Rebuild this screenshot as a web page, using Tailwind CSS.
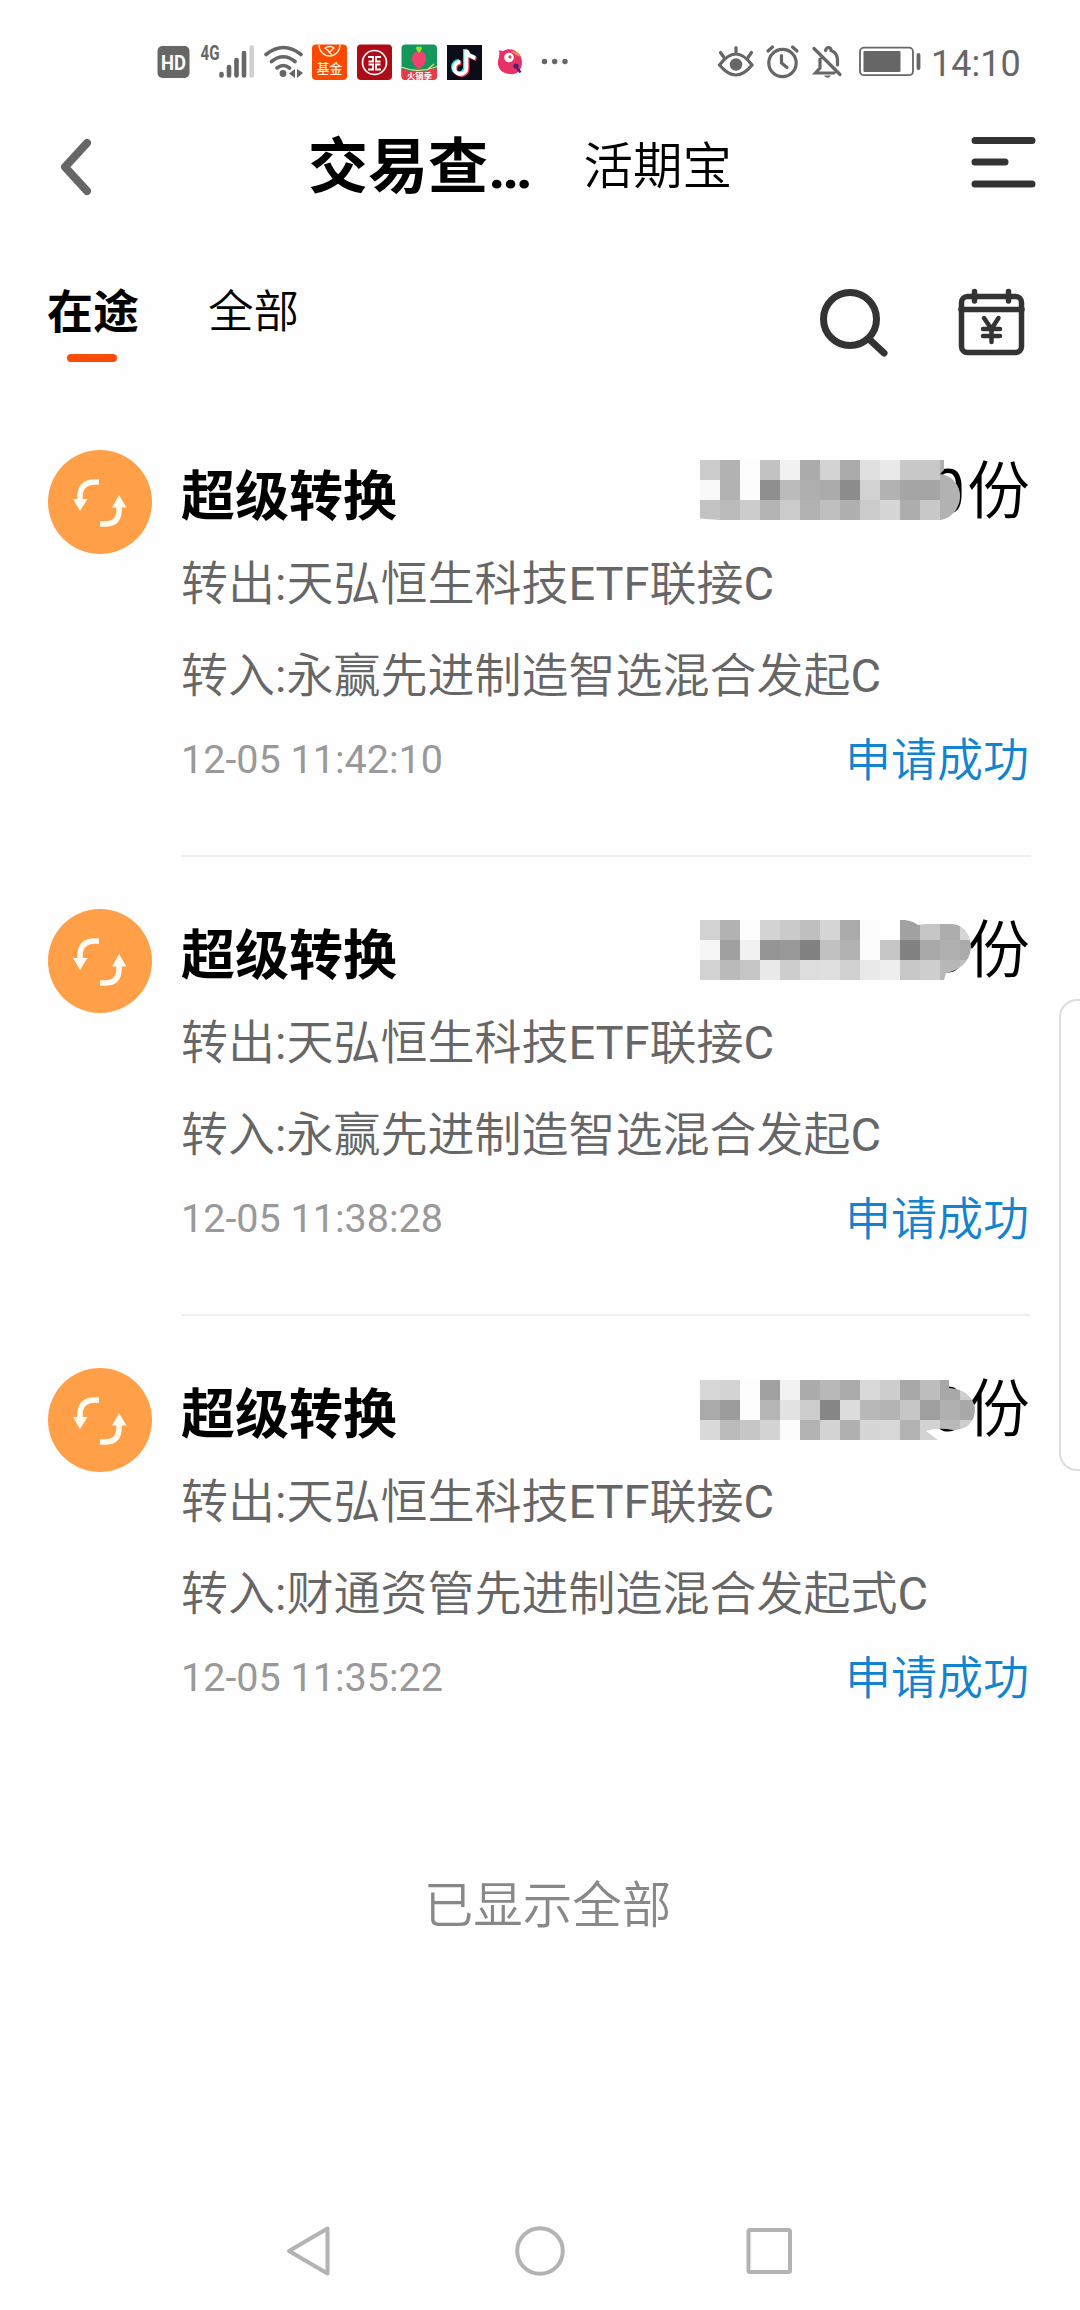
<!DOCTYPE html>
<html lang="zh-CN">
<head>
  <meta charset="UTF-8" />
  <title>交易查询</title>
  <script src="https://cdn.jsdelivr.net/npm/@tailwindcss/browser@4"></script>
</head>
<body class="bg-[#fefefe] w-[1080px] h-[2310px] flex flex-col overflow-hidden relative font-['Roboto','Noto_Sans_CJK_SC',sans-serif] text-black">

  <!-- Status bar -->
  <div class="h-[110px] pt-[40px] pl-[157px] pr-[60px] flex items-start justify-between shrink-0">
    <svg class="w-[420px] h-[44px]" viewBox="157 40 420 44">
      <rect x="157.500" y="46" width="32" height="32" rx="5" fill="#666" />
      <text x="173.500" y="70" text-anchor="middle" textLength="25" lengthAdjust="spacingAndGlyphs" font-size="21" font-weight="700" fill="#fff">HD</text>
      <text x="200.500" y="60" textLength="19" lengthAdjust="spacingAndGlyphs" font-size="19.500" font-weight="700" fill="#666">4G</text>
      <g stroke="#666" stroke-width="4.600" stroke-linecap="round">
        <path d="M221.500 74v1.500M229 67v8.500M236.500 60v15.500M244 53v22.500" />
        <path stroke="#d0d0d0" d="M251.700 47.500v28" />
      </g>
      <g fill="none" stroke="#666" stroke-width="3.600" stroke-linecap="round">
        <path d="M266 54.500q17.500-14 35 0M271.500 61.500q11.800-9.500 23.500 0M277 68q6.300-5 12.500 0" />
      </g>
      <circle cx="283" cy="73.500" r="3.400" fill="#666" />
      <path d="M295 69v9l-6-4.500zM297 69l6 4-6 5z" fill="#666" />
      <!-- 基金 -->
      <rect x="312" y="44.500" width="35" height="35.500" rx="4" fill="#fb4a05" />
      <path d="M319 45a10.500 11 0 0 0 21 0" fill="none" stroke="#fff3d8" stroke-width="1.300" />
      <path d="M325 48q5-3 9 0l-4 4zM328 51l4 4" fill="none" stroke="#fff3d8" stroke-width="1.300" />
      <text x="329.500" y="72.500" text-anchor="middle" font-size="13" font-weight="500" fill="#fff3d8">基金</text>
      <!-- bank -->
      <rect x="357" y="44.500" width="35" height="35.500" rx="4" fill="#ad0b16" />
      <circle cx="374.500" cy="62.500" r="12" fill="none" stroke="#fff" stroke-width="1.700" />
      <path d="M368 57h5v4.500h-4.500M381 57h-5v4.500h4.500M368.500 64.500h4.500v5h-5M380.500 64.500h-4.500v5h5" fill="none" stroke="#fff" stroke-width="1.900" />
      <!-- radish -->
      <rect x="401.500" y="44.500" width="35.500" height="35.500" rx="4" fill="#15965a" />
      <path d="M401.500 69q14 5 35.500-1v8q0 4-4 4h-27.500q-4 0-4-4z" fill="#e93a49" />
      <path d="M401.500 67q16 7 35.500-.5M427 70l7-6" fill="none" stroke="#ead88a" stroke-width="1.200" />
      <path d="M419 52c-5-1-7 3-7 7 0 5 4 8 7 10 3-2 7-5 7-10 0-4-2-8-7-7z" fill="#ef426e" />
      <path d="M419 52q-4-6 0-4 4-2 0 4" fill="#94df32" stroke="#94df32" stroke-width="2" />
      <text x="419.500" y="78.500" text-anchor="middle" font-size="8.300" font-weight="700" fill="#fff">火锅季</text>
      <!-- music note -->
      <rect x="447" y="45" width="35" height="35" fill="#0c0b18" />
      <g fill="none" stroke-width="4">
        <path stroke="#25dfdc" d="M465 49v18.500a6 6 0 1 1-6-6.500M465 49q1 6 9 8" />
        <path stroke="#f33559" d="M467.500 51v18.500a6 6 0 1 1-6-6.500M467.500 51q1 6 9 8" />
        <path stroke="#fff" d="M466.300 50v18.500a6 6 0 1 1-6-6.500M466.300 50q1 6 9 8" />
      </g>
      <!-- parrot -->
      <path d="M499 50q2 1 4 1c9-5 19 2 19 11s-6 13-12 12c-8 0-13-6-12-13q2-6 1-11z" fill="#e73267" />
      <path d="M510 51q8-1 11 6l-5-2z" fill="#f58a52" />
      <circle cx="509" cy="57.500" r="4.800" fill="#fff" />
      <circle cx="510" cy="57" r="1.700" fill="#d35a4c" />
      <circle cx="516" cy="66" r="2.600" fill="#571c6f" />
      <path d="M517 68l3.500 4.500" stroke="#571c6f" stroke-width="2.500" />
      <g fill="#666"><circle cx="544.500" cy="61.500" r="2.700" /><circle cx="554.700" cy="61.500" r="2.700" /><circle cx="565" cy="61.500" r="2.700" /></g>
    </svg>
    <div class="flex items-start">
      <svg class="w-[215px] h-[44px]" viewBox="717 40 215 44" fill="none" stroke="#666" stroke-width="3.200" stroke-linecap="round">
        <path d="M719.500 65q16.500-22 32.500 0-16 20-32.500 0zM736 47.500v6M720.500 52.500l3.500 5M751.500 52.500l-3.500 5" />
        <circle cx="736" cy="64.500" r="6.200" fill="#666" stroke="none" />
        <circle cx="782.500" cy="63" r="13.700" />
        <path d="M781.500 55.500v7.500l5.500 4.500M768 51l4.500-4M797 51l-4.500-4" />
        <path d="M814 48.500l26 26M820 59v9l-4.500 5H834M825.500 50.500q1-3 3-3 2.500 0 2.500 3 6.500 2.500 6.500 9.500v5" />
        <path d="M824 75.500h7q-3.500 4.500-7 0z" fill="#666" stroke="none" />
        <rect x="860" y="47.700" width="53" height="27.500" rx="4" stroke-width="1.800" />
        <rect x="863.500" y="51" width="37" height="21" rx="1" fill="#666" stroke="none" />
        <path d="M918.500 55v13" stroke-width="3.800" />
      </svg>
      <span class="w-[88px] text-[36px] leading-[44px] pt-[2px] text-[#666] whitespace-nowrap -ml-px mr-px">14:10</span>
    </div>
  </div>

  <!-- Header -->
  <header class="h-[114px] pl-[58px] pr-[42px] flex items-center shrink-0">
    <svg class="w-[36px] h-[64px]" viewBox="0 0 36 64" fill="none" stroke="#666" stroke-width="8" stroke-linecap="round" stroke-linejoin="round"><path d="M29 8L7 32l22 24" /></svg>
    <h1 class="ml-[214px] pt-[2px] text-[60px] leading-[84px] font-bold whitespace-nowrap">交易查…</h1>
    <span class="ml-[51px] text-[49.500px] leading-[70px] font-[350]">活期宝</span>
    <svg class="ml-auto w-[68px] h-[54px] -mt-[10px]" viewBox="0 0 68 54" stroke="#333" stroke-width="7" stroke-linecap="round"><path d="M5 5.500h57M5 27h30M5 49h57" /></svg>
  </header>

  <!-- Tabs -->
  <nav class="h-[205px] pl-[47px] pr-[53px] pt-[54px] flex items-start shrink-0">
    <div class="flex flex-col items-center">
      <span class="text-[46px] leading-[68px] font-bold">在途</span>
      <span class="mt-[8px] mr-[2px] w-[50px] h-[8px] rounded-full bg-[#f84c0a]"></span>
    </div>
    <span class="ml-[69px] pt-px text-[45.500px] leading-[68px] font-[350]">全部</span>
    <svg class="ml-auto mt-[10px] w-[72px] h-[72px]" viewBox="816 288 72 72" fill="none" stroke="#333" stroke-width="7" stroke-linecap="round"><circle cx="850" cy="319" r="26.500" /><path d="M869.500 339.500l14.500 13.500" /></svg>
    <svg class="ml-[66px] mt-[10px] w-[73px] h-[72px]" viewBox="954 288 73 72" fill="none" stroke="#333" stroke-width="5.500" stroke-linecap="round">
      <rect x="961.500" y="296.500" width="60" height="56" rx="6" />
      <path d="M961 309.500h61M974.500 291.500v9.500M1008.500 291.500v9.500" />
      <path stroke-width="4.500" d="M984 318l7.500 11 7-11M991.500 329v13M983 329h17M983 336h17" />
    </svg>
  </nav>

  <main id="records" class="shrink-0"></main>

  <p class="mt-[65px] pl-[15px] text-center text-[49.500px] leading-[70px] font-[350] text-[#888]">已显示全部</p>

  <!-- Side handle -->
  <div class="absolute left-[1059px] top-[999px] w-[40px] h-[472px] rounded-[18px] border-2 border-[#ddd] bg-white"></div>

  <!-- System navigation -->
  <footer class="mt-auto h-[118px] pl-[283px] pr-[285px] flex items-center justify-between">
    <svg class="w-[52px] h-[56px]" viewBox="0 0 52 56" fill="none" stroke="#b3b3b3" stroke-width="4" stroke-linejoin="round"><path d="M44.500 5.500v45L6 28z" /></svg>
    <svg class="w-[54px] h-[56px]" viewBox="0 0 54 56" fill="none" stroke="#b3b3b3" stroke-width="4"><circle cx="28" cy="28" r="22.800" /></svg>
    <svg class="w-[52px] h-[56px]" viewBox="0 0 52 56" fill="none" stroke="#b3b3b3" stroke-width="4"><rect x="5.500" y="7" width="41.500" height="42" rx="1.500" /></svg>
  </footer>

<script>
  // mask rows are grey levels of 20px blocks; clip is the outline of the brushed area
  const records = [
    {
      out: '天弘恒生科技ETF联接C', into: '永赢先进制造智选混合发起C', time: '12-05 11:42:10',
      mask: ['ccb2fdc2f1abd3aae0e9c8c8b0', 'f9b2fc8fbbafab8dd2b2a5a5b2', 'c3bbcbb4cbb2bfafcbd6adc8b2'],
      clip: 'M60 20H304V30L300 34C314 36 321 47 320 58C319 70 310 79 300 80H80L60 78.500Z', top: 0,
    },
    {
      out: '天弘恒生科技ETF联接C', into: '永赢先进制造智选混合发起C', time: '12-05 11:38:28',
      mask: ['d2b2fdd3cabfd6abfcfea1c6add6', 'f6a0f1959982c1b2fcc682a9b0aa', 'd2bac6e9cddddfd1e9eec7cfb7c0'],
      clip: 'M60 20H265Q273 21 278 25Q283 24 290 24H312C325 25 331 36 331 48C329 63 320 70 306 73L304 80H60Z', top: 1,
    },
    {
      out: '天弘恒生科技ETF联接C', into: '财通资管先进制造混合发起式C', time: '12-05 11:35:22',
      mask: ['d7d3fda1f2abb8aad9cda8bda8ce', 'aa9cfdb5e2cd86dcb8b4c69fb0a8', 'dabbc6d3fcb3d3b0d6d8b3d3b9cd'],
      clip: 'M60 20H309V28C324 29 335 37 335 51C334 64 325 70 313 70Q298 67 286 71L298 80H60Z', top: 2,
    },
  ];

  const blocks = rows => rows.map((row, y) => row.match(/../g).map((g, x) =>
    `<rect x="${60 + x * 20}" y="${20 + y * 20}" width="20" height="20" fill="#${g}${g}${g}" />`).join('')).join('');

  // latin letters need a heavier weight than the chinese text around them
  const mixed = s => s.replace(/[A-Z:]+/g, m => `<span class="font-normal">${m}</span>`);

  document.getElementById('records').innerHTML = records.map((r, i) => `
    <section class="h-[459px] pl-[48px] pr-[49px] flex">
      <svg class="mt-[21px] w-[104px] h-[104px] shrink-0" viewBox="0 0 104 104">
        <circle cx="52" cy="52" r="52" fill="#ff9f48" />
        <g fill="none" stroke="#fffaf0" stroke-width="5.500"><path d="M51 32h-4q-15 0-15 15v4M52 74h5q14 0 14-14v-4" /></g>
        <path d="M25 49h14.500L32 61zM64 57.500h14.500L71 45z" fill="#fffaf0" />
      </svg>
      <div class="ml-[29px] flex-1 flex flex-col ${i < 2 ? 'border-b-2 border-[#f0f0f0]' : ''} h-[428px]">
        <div class="relative h-[117px] pr-px flex justify-between">
          <h2 class="pt-[29px] text-[54px] leading-[80px] font-bold">超级转换</h2>
          <div class="pt-[18px] text-[63px] leading-[90px] font-[350]"><span class="mr-[2px] text-[61px] font-normal">0</span>份</div>
          <svg class="absolute left-[459px] w-[340px] h-[110px]" style="top:${11 + r.top}px" viewBox="0 0 340 110" shape-rendering="crispEdges">
            <clipPath id="brush${i}"><path d="${r.clip}" /></clipPath>
            <g clip-path="url(#brush${i})">${blocks(r.mask)}</g>
          </svg>
        </div>
        <p class="mt-[4px] text-[47px] leading-[68px] font-[350] text-[#666]">${mixed('转出:' + r.out)}</p>
        <p class="mt-[24px] text-[47px] leading-[68px] font-[350] text-[#666]">${mixed('转入:' + r.into)}</p>
        <div class="mt-[16px] pr-[2px] flex justify-between items-center leading-[68px]">
          <span class="text-[39.500px] text-[#999]">${r.time}</span>
          <span class="text-[46px] font-[350] text-[#1283cf]">申请成功</span>
        </div>
      </div>
    </section>
  `).join('');
</script>
</body>
</html>
